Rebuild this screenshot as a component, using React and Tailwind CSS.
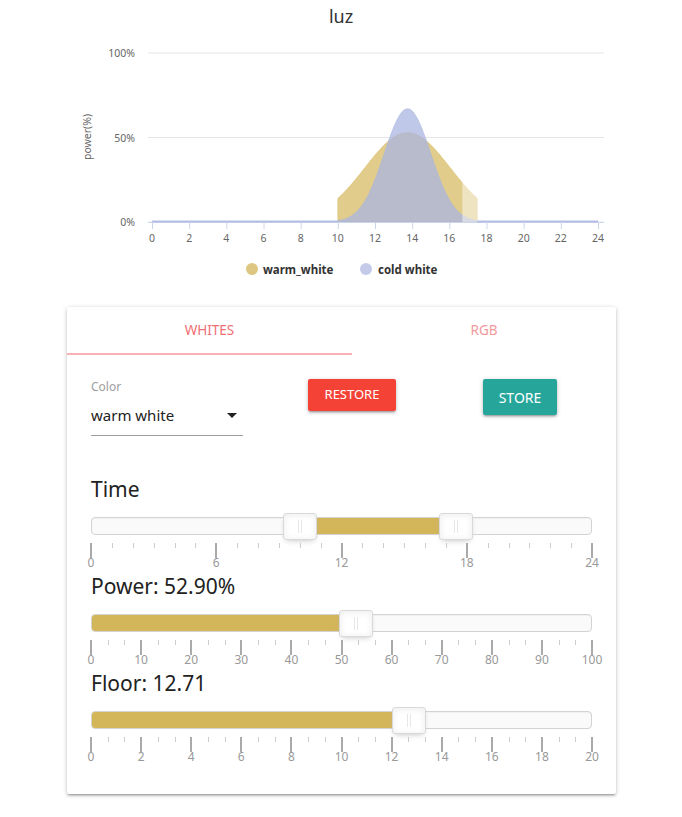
import React from 'react';

const X0 = 152, X1 = 598, Y0 = 222, Y100 = 53;
const xh = (h) => X0 + (h / 24) * (X1 - X0);
const yv = (v) => Y0 - (v / 100) * (Y0 - Y100);

const warm = (h) => 52.9 * Math.exp(-((h - 13.75) ** 2) / (2 * 5.28));
const cold = (h) => 67 * Math.exp(-((h - 13.75) ** 2) / (2 * 1.557));

function areaPath(fn, from, to) {
    let d = `M${xh(from).toFixed(2)},${Y0}`;
    for (let i = 0; i <= 80; i++) {
        const h = from + ((to - from) * i) / 80;
        d += ` L${xh(h).toFixed(2)},${yv(fn(h)).toFixed(2)}`;
    }
    return d + ` L${xh(to).toFixed(2)},${Y0} Z`;
}

const Chart = () => {
    const hours = Array.from({ length: 13 }, (_, i) => i * 2);
    return (
        <svg width="682" height="300" className="block" style={{ fontFamily: '"Noto Sans", sans-serif' }}>
            <text x="341" y="23" textAnchor="middle" fontSize="18" fill="#333">luz</text>

            {[0, 50, 100].map(v => (
                <g key={v}>
                    <line x1="148" x2="604" y1={yv(v)} y2={yv(v)} stroke="#e6e6e6" strokeWidth="1" />
                    <text x="135" y={yv(v) + 4} textAnchor="end" fontSize="10.5" fill="#666">{v}%</text>
                </g>
            ))}
            <text x="91" y="137" textAnchor="middle" fontSize="10.5" fill="#666" transform="rotate(-90 91 137)">power(%)</text>

            {/* series */}
            <path d={areaPath(warm, 10, 17.5)} fill="#d4b65a" fillOpacity="0.7" stroke="#d4b65a" strokeOpacity="0.5" strokeWidth="1" />
            <path d={areaPath(cold, 10, 17.5)} fill="#a9b6e0" fillOpacity="0.75" stroke="#a9b6e0" strokeOpacity="0.6" strokeWidth="1" />
            <rect x={xh(16.7)} y={yv(30)} width={xh(17.7) - xh(16.7)} height={Y0 - yv(30)} fill="#fff" fillOpacity="0.47" />

            {/* x axis */}
            <line x1="148" x2="604" y1={Y0 + 0.5} y2={Y0 + 0.5} stroke="#ccd6eb" strokeWidth="1" />
            <line x1={X0} x2={xh(10)} y1={Y0 - 0.5} y2={Y0 - 0.5} stroke="#b3bee2" strokeWidth="2" />
            <line x1={xh(17.5)} x2={X1} y1={Y0 - 0.5} y2={Y0 - 0.5} stroke="#b3bee2" strokeWidth="2" />
            {hours.map(h => (
                <g key={h}>
                    <line x1={xh(h) + 0.5} x2={xh(h) + 0.5} y1={Y0} y2={Y0 + 7} stroke="#ccd6eb" strokeWidth="1" />
                    <text x={xh(h)} y="242" textAnchor="middle" fontSize="10.5" fill="#666">{h}</text>
                </g>
            ))}

            {/* legend */}
            <circle cx="252" cy="269" r="6" fill="#dcc680" />
            <text x="263" y="273.5" fontSize="11.5" fontWeight="bold" fill="#333">warm_white</text>
            <circle cx="366" cy="269" r="6" fill="#c3cbe8" />
            <text x="378" y="273.5" fontSize="11.5" fontWeight="bold" fill="#333">cold white</text>
        </svg>
    );
};

const Pips = ({ max, major, minorCount }) => {
    const step = major / (minorCount + 1);
    const n = Math.round(max / step);
    const marks = Array.from({ length: n + 1 }, (_, i) => i);
    return (
        <div className="relative h-[37px]">
            {marks.map(i => {
                const isMajor = i % (minorCount + 1) === 0;
                const pct = (i / n) * 100;
                return (
                    <React.Fragment key={i}>
                        <div
                            className={isMajor ? 'absolute top-[8px] w-[2px] -ml-[1px] h-[15px] bg-[#aaa]' : 'absolute top-[8px] w-[1px] h-[5px] bg-[#ccc]'}
                            style={{ left: `${pct}%` }}
                        />
                        {isMajor && (
                            <div className="absolute top-[21px] -translate-x-1/2 text-[12px] leading-[14px] text-[#999]" style={{ left: `${pct}%` }}>
                                {Math.round(i * step)}
                            </div>
                        )}
                    </React.Fragment>
                );
            })}
        </div>
    );
};

const Handle = ({ pct }) => (
    <div
        className="absolute top-[-5px] w-[34px] h-[27px] bg-white border border-[#d9d9d9] rounded-[3px] shadow-[inset_0_0_1px_#fff,inset_0_1px_7px_#ebebeb,0_3px_6px_-3px_#bbb] flex items-center justify-center gap-[2px] z-10"
        style={{ left: `calc(${pct}% - 17px)` }}
    >
        <div className="w-[1px] h-[13px] bg-[#e8e7e6]" />
        <div className="w-[1px] h-[13px] bg-[#e8e7e6]" />
    </div>
);

const Slider = ({ label, from, to, max, major, minorCount, handles }) => (
    <div className="flex flex-col">
        <div className="mt-[2px] h-[24px] text-[21px] leading-[24px] text-[#222]">{label}</div>
        <div className="mt-[16px] relative h-[18px] rounded-[4px] border border-[#d3d3d3] bg-[#fafafa] shadow-[inset_0_1px_1px_#f0f0f0]">
            <div
                className="absolute top-0 bottom-0 bg-[#d3b55a] rounded-[3px]"
                style={{ left: `${(from / max) * 100}%`, right: `${100 - (to / max) * 100}%` }}
            />
            {handles.map((v, i) => <Handle key={i} pct={(v / max) * 100} />)}
        </div>
        <Pips max={max} major={major} minorCount={minorCount} />
    </div>
);

const App = () => {
    return (
        <div className="w-[682px] min-h-[817px] bg-white" style={{ fontFamily: '"Noto Sans", sans-serif' }}>
            <Chart />

            <div className="ml-[67px] mt-[7px] w-[549px] bg-white rounded-[2px] shadow-[0_2px_2px_0_rgba(0,0,0,0.14),0_3px_1px_-2px_rgba(0,0,0,0.12),0_1px_5px_0_rgba(0,0,0,0.2)] pb-[28px]">
                {/* Tabs */}
                <div className="flex h-[48px]">
                    <div className="w-[285px] flex items-center justify-center text-[13.5px] uppercase text-[#ee6e73] border-b-2 border-[#f6b2b5]">
                        Whites
                    </div>
                    <div className="w-[264px] flex items-center justify-center text-[13.5px] uppercase text-[#f19a9d] border-b-2 border-transparent">
                        RGB
                    </div>
                </div>

                <div className="px-6">
                    {/* Color select + buttons */}
                    <div className="flex items-start pt-[24px]">
                        <div className="w-[152px] flex flex-col">
                            <div className="h-[16px] text-[12px] leading-[16px] text-[#9e9e9e]">Color</div>
                            <div className="h-[41px] flex items-center justify-between border-b border-[#9e9e9e] text-[15px] text-[#222]">
                                <span>warm white</span>
                                <svg width="24" height="24" viewBox="0 0 24 24" className="-mr-[1px]">
                                    <path d="M7 10l5 5 5-5z" fill="#222" />
                                </svg>
                            </div>
                        </div>
                        <button className="ml-[65px] w-[88px] h-[32px] rounded-[2px] bg-[#f44336] text-white text-[13px] uppercase shadow-[0_2px_2px_0_rgba(0,0,0,0.14),0_3px_1px_-2px_rgba(0,0,0,0.12),0_1px_5px_0_rgba(0,0,0,0.2)]">
                            Restore
                        </button>
                        <button className="ml-[87px] w-[74px] h-[36px] rounded-[2px] bg-[#26a69a] text-white text-[14px] uppercase shadow-[0_2px_2px_0_rgba(0,0,0,0.14),0_3px_1px_-2px_rgba(0,0,0,0.12),0_1px_5px_0_rgba(0,0,0,0.2)]">
                            Store
                        </button>
                    </div>

                    <div className="mt-[39px] flex flex-col">
                        <Slider label="Time" from={10} to={17.5} max={24} major={6} minorCount={5} handles={[10, 17.5]} />
                        <Slider label="Power: 52.90%" from={0} to={52.9} max={100} major={10} minorCount={2} handles={[52.9]} />
                        <Slider label="Floor: 12.71" from={0} to={12.71} max={20} major={2} minorCount={2} handles={[12.71]} />
                    </div>
                </div>
            </div>
        </div>
    );
};

export default App;
